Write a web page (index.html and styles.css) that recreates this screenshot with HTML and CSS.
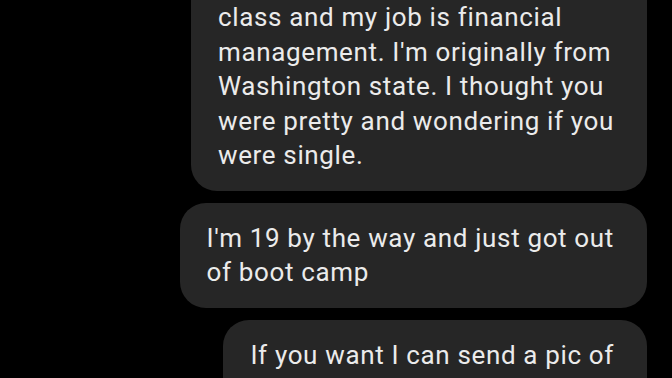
FILE: index.html
```html
<!DOCTYPE html>
<html lang="en">
<head>
    <meta charset="UTF-8">
    <meta name="viewport" content="width=device-width, initial-scale=1.0">
    <title>Messages</title>
    <link rel="stylesheet" href="styles.css">
</head>
<body>
    <div class="thread">
        <div class="bubble first">
            class and my job is financial<br>
            management. I'm originally from<br>
            Washington state. I thought you<br>
            were pretty and wondering if you<br>
            were single.
        </div>
        <div class="bubble">
            I'm 19 by the way and just got out<br>
            of boot camp
        </div>
        <div class="bubble">
            If you want I can send a pic of<br>
            myself
        </div>
    </div>
</body>
</html>
```

FILE: styles.css
```css
html, body{
    margin: 0;
    background: #000;
    height: 100%;
    overflow: hidden;
}
.thread{
    display: flex;
    flex-direction: column;
    align-items: flex-end;
    gap: 12px;
    padding-right: 25px;
    font-family: Roboto, "Noto Sans", sans-serif;
    font-size: 26px;
    line-height: 34.5px;
    letter-spacing: 0.65px;
    color: #ebebeb;
}
.bubble{
    background: #262626;
    border-radius: 26px;
    padding: 18px 33px 18px 27px;
    white-space: nowrap;
}
.bubble.first{
    margin-top: -40px;
    padding-top: 40px;
}
```
